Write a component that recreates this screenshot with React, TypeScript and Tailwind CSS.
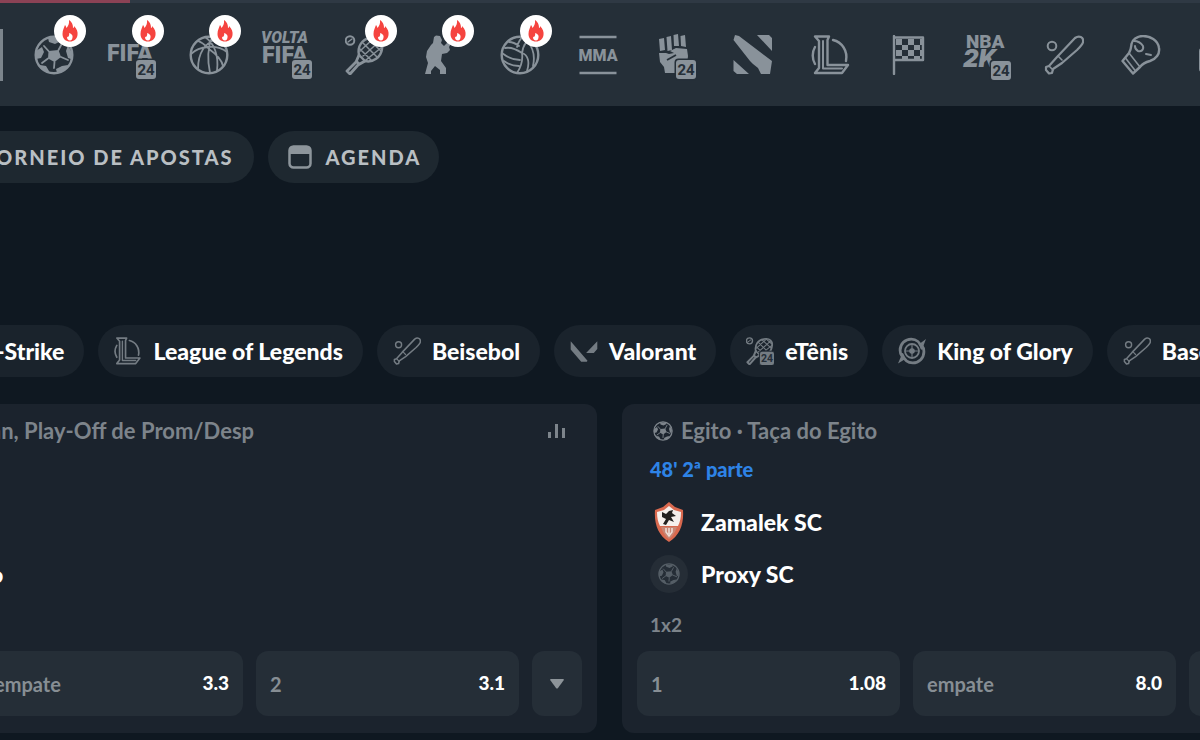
import type { ReactNode } from 'react';

type IconProps = { className?: string };

const ICON = 'w-10 h-10 shrink-0';

function Frame({ className = ICON, children }: IconProps & { children: ReactNode }) {
  return (
    <svg className={className} viewBox="0 0 40 40" fill="none" stroke="currentColor" strokeWidth={2} strokeLinejoin="round" strokeLinecap="round" aria-hidden="true">
      {children}
    </svg>
  );
}

// Wider box for the icons that carry a word mark or the "24" tag
function WordFrame({ children }: { children: ReactNode }) {
  return (
    <svg className="w-[52px] h-[52px] shrink-0 overflow-visible" viewBox="0 0 52 52" fill="currentColor" aria-hidden="true">
      {children}
    </svg>
  );
}

function Tag24({ x, y }: { x: number; y: number }) {
  return (
    <g stroke="none">
      <rect x={x - 1.5} y={y - 1.5} width="23" height="22" rx="4" fill="#252f38" />
      <rect x={x} y={y} width="20" height="19" rx="3" fill="currentColor" />
      <text x={x + 10} y={y + 15} textAnchor="middle" fontSize="15" className="font-[Roboto,sans-serif] font-bold fill-[#252f38]">24</text>
    </g>
  );
}

function SoccerIcon({ className }: IconProps) {
  return (
    <Frame className={className}>
      <circle cx="20" cy="20" r="18.3" strokeWidth="2.4" />
      <path d="M14.5 16L24.5 15 27 22 20.5 27 14 23.5Z" fill="currentColor" stroke="none" />
      <path d="M14.5 16L10 11M24.5 15L28 8.500M27 22L34 25M20.500 27L20 33M14 23.500L8 28" strokeWidth="1.800" />
      <path d="M14 3L26 3 27 6 21 9 15 7ZM2 16L8 12 10 17 7 23 2 24ZM34 10L38 18 37 24 34 23 32 16ZM6 30L12 31 15 36 14 38 7 34ZM22 34L28 31 34 30 30 36 23 38Z" fill="currentColor" stroke="none" />
    </Frame>
  );
}

function BasketballIcon() {
  return (
    <Frame>
      <circle cx="20" cy="20" r="18.3" strokeWidth="2.4" />
      <path d="M2 19C10 11 28 9 38 17M16 2C25 8 30 20 28 36M23 2C19 12 18 24 21 38M28 4C16 8 9 18 9 34M9 6C15 8 18 12 20 14M20 14C27 19 33 26 34 31" strokeWidth="1.8" />
    </Frame>
  );
}

function Racket() {
  return (
    <>
      <circle cx="5" cy="5.5" r="4.3" />
      <path d="M3 7L7 4" strokeWidth="1.4" />
      <path d="M14 20C12 12 17 4 25 3C34 1 39 6 37 14C36 22 28 28 20 26Z" strokeWidth="2.4" />
      <path d="M14 20L11 27 2 36 5 39 13 30 20 26M12 27L14 29" strokeWidth="2.8" />
      <path d="M18 8L32 22M15 14L26 25M23 4L36 16M29 3L37 10M15 16L28 4M18 21L35 6M21 25L37 12" strokeWidth="1.5" />
    </>
  );
}

function TennisIcon() {
  return (
    <Frame>
      <Racket />
    </Frame>
  );
}

function ETennisIcon({ className }: IconProps) {
  return (
    <Frame className={className}>
      <Racket />
      <Tag24 x={20} y={21} />
    </Frame>
  );
}

function CounterStrikeIcon() {
  return (
    <Frame>
      <path d="M12 2L14 .5 18 1 20 5 19 8 22 11 30 3 31 5 27 12 28 15 25 18 20 19 19 26 24 33 24 39 18 39 18 35 13 31 9 36 9 39 3 39 6 28 4 22 5 16 9 10 11 8Z" fill="currentColor" stroke="none" />
    </Frame>
  );
}

function VolleyballIcon() {
  return (
    <Frame>
      <circle cx="20" cy="20" r="18.3" strokeWidth="2.4" />
      <path d="M22 18C16 14 10 12 5 13M19 11C15 8 12 7 9 7M22 18C23 25 21 32 17 38M20 25C13 25 7 22 2 18M19 31C13 31 8 29 4 26M22 18C23 11 26 6 31 4M17 12C18 8 20 4 23 2M22 18C28 20 30 27 27 36M28 7C33 13 35 22 33 31" strokeWidth="1.8" />
    </Frame>
  );
}

function MmaIcon() {
  return (
    <Frame>
      <path d="M1.500 2H38.500M1.500 38H38.500" strokeWidth="2.4" strokeLinecap="butt" />
      <text x="20" y="26" textAnchor="middle" fontSize="16" stroke="none" fill="currentColor" className="font-[Roboto,sans-serif] font-black">MMA</text>
    </Frame>
  );
}

function FifaIcon() {
  return (
    <WordFrame>
      <text x="1" y="32" fontSize="23" className="font-[Roboto,sans-serif] font-black">FIFA</text>
      <Tag24 x={30} y={31} />
    </WordFrame>
  );
}

function VoltaIcon() {
  return (
    <WordFrame>
      <text x="0" y="14" fontSize="16" className="font-[Roboto,sans-serif] font-black italic">VOLTA</text>
      <text x="1" y="34" fontSize="23" className="font-[Roboto,sans-serif] font-black">FIFA</text>
      <Tag24 x={31} y={31} />
    </WordFrame>
  );
}

function FistIcon() {
  return (
    <WordFrame>
      <path d="M10 10L15 9 16 21 11 22ZM17.500 8L22 7 23 21 18.500 22ZM24.500 6L29 5 30 17 25 17ZM31.500 7L36 6 37 18 32 17Z" />
      <path d="M10 24L17 24 20 25 25 24 21 22 27 19 38 20 39 27 38 36 28 44 16 44 15 38 11 33Z" />
      <path d="M18 31L27 26" stroke="#252f38" strokeWidth="1.800" />
      <Tag24 x={27} y={31} />
    </WordFrame>
  );
}

function DotaIcon() {
  return (
    <Frame>
      <path d="M2 0L6 1 39 26 37 39 28 39 25 33 20 29 17 26 .5 5ZM24 0H36L39 3V16ZM.500 25L16 39H4L.500 36Z" fill="currentColor" stroke="none" />
    </Frame>
  );
}

function LeagueIcon({ className }: IconProps) {
  return (
    <Frame className={className}>
      <path d="M4 1.500H18L16.500 5V30H37L31 38H4L8 33V6Z" strokeWidth="2.400" />
      <path d="M12 6V33.500H31" strokeWidth="2" />
      <path d="M22 5C31 7 37 16 35 26" strokeWidth="2.400" />
      <path d="M4 12C1 17 1 24 4 29" strokeWidth="2.400" />
    </Frame>
  );
}

function FlagIcon() {
  return (
    <Frame>
      <path d="M6 1V39M6 2.500H35V25H6" strokeWidth="2.400" />
      <path d="M8 4h6v6h-6zM20 4h6v6h-6zM14 10h6v5h-6zM26 10h6v5h-6zM8 15h6v6h-6zM20 15h6v6h-6zM32 4h3v6h-3zM32 15h3v6h-3zM14 21h6v4h-6zM26 21h6v4h-6z" fill="currentColor" stroke="none" />
    </Frame>
  );
}

function NbaIcon() {
  return (
    <WordFrame>
      <text x="6" y="19" fontSize="19" className="font-[Roboto,sans-serif] font-black">NBA</text>
      <text x="3" y="38" fontSize="24" className="font-[Inter,sans-serif] font-black italic">2K</text>
      <Tag24 x={31} y={32} />
    </WordFrame>
  );
}

function BatIcon({ className }: IconProps) {
  return (
    <Frame className={className}>
      <circle cx="8" cy="11" r="4.300" />
      <path d="M31 3C35 0 40 2 39 7C39 9 37 11 33 15L18 28 9 34 8 38 5 38.500 2 35 2 32 5 31 13 22Z" strokeWidth="2.200" />
      <path d="M5 31L9 35M14 21L18 25" strokeWidth="1.600" />
    </Frame>
  );
}

function GloveIcon() {
  return (
    <Frame>
      <path d="M8 18L1.500 26 12 38.500 19 32C22 28 25 27 29 26C35 24 39 19 38 13C37 5 29 1 22 1C16 1 11 5 10.500 9C10 13 10 15 8 18Z" strokeWidth="2.400" />
      <path d="M8 18L19 32M4.500 23L14.500 36" strokeWidth="1.600" />
      <path d="M13 6C17 6 20 8 22 11C23 15 20 17 17 16C15 15 14 13 14 11M25 19L30 20" />
    </Frame>
  );
}

function ValorantIcon({ className }: IconProps) {
  return (
    <Frame className={className}>
      <path d="M1 6L25 34 24 35.500H16L1 18ZM39 6V17L34 23H23Z" fill="currentColor" stroke="none" />
    </Frame>
  );
}

function KingIcon({ className }: IconProps) {
  return (
    <Frame className={className}>
      <path d="M34 16C32 8 26 3 19 3C10 3 3 10 3 19C3 23 4 26 6 28M6 25C9 33 14 37 21 37C30 37 37 30 37 21C37 17 36 14 34 12" strokeWidth="4" />
      <circle cx="20" cy="20" r="10" strokeWidth="2.600" />
      <circle cx="20" cy="20" r="3" fill="currentColor" />
      <path d="M20 12V28M12 20H28" strokeWidth="1.600" />
      <path d="M40 3L29 11 35 16ZM0 38L11 31 5 26Z" fill="currentColor" stroke="none" />
    </Frame>
  );
}

function CrateIcon() {
  return (
    <Frame>
      <rect x="1" y="14" width="38" height="22" rx="2" fill="currentColor" />
    </Frame>
  );
}

function HotBadge() {
  return (
    <span className="absolute left-1/2 -top-4 flex size-8 items-center justify-center rounded-full bg-white">
      <svg className="h-[22px] w-4" viewBox="0 0 16 22" aria-hidden="true">
        <path d="M7 0C11 3 11 6 11 8C12 8 12 7 12 6C15 9 16 12 15.500 15C15 19 12 21.500 8 21.500C4 21.500 .5 19 .5 14C.5 10 2 8 3 5C4 6 4 7 4.500 8C6 6 7.500 4 7 0Z" fill="#f5443f" />
        <path d="M7 13C10 14 11 15.500 10.500 17.500C10.200 19.500 9.500 20.500 8 20.500C6 20.500 5 19 5 17.500C5.500 16.500 6 17 6.500 16.500C7 15.500 7.500 14.500 7 13Z" fill="#fff" />
      </svg>
    </span>
  );
}

const sports = [
  { name: 'Futebol', icon: <SoccerIcon />, hot: true },
  { name: 'FIFA 24', icon: <FifaIcon />, hot: true },
  { name: 'Basquetebol', icon: <BasketballIcon />, hot: true },
  { name: 'Volta FIFA 24', icon: <VoltaIcon /> },
  { name: 'Ténis', icon: <TennisIcon />, hot: true },
  { name: 'Counter-Strike', icon: <CounterStrikeIcon />, hot: true },
  { name: 'Voleibol', icon: <VolleyballIcon />, hot: true },
  { name: 'MMA', icon: <MmaIcon /> },
  { name: 'Luta 24', icon: <FistIcon /> },
  { name: 'Dota 2', icon: <DotaIcon /> },
  { name: 'League of Legends', icon: <LeagueIcon /> },
  { name: 'Automobilismo', icon: <FlagIcon /> },
  { name: 'NBA 2K24', icon: <NbaIcon /> },
  { name: 'Beisebol', icon: <BatIcon /> },
  { name: 'Boxe', icon: <GloveIcon /> },
  { name: 'Mais', icon: <CrateIcon /> },
];

const CHIP_ICON = 'w-7 h-7 shrink-0 text-[#747c83]';

const chips = [
  { label: 'League of Legends', icon: <LeagueIcon className={CHIP_ICON} /> },
  { label: 'Beisebol', icon: <BatIcon className={CHIP_ICON} /> },
  { label: 'Valorant', icon: <ValorantIcon className={CHIP_ICON} /> },
  { label: 'eTênis', icon: <ETennisIcon className={CHIP_ICON} /> },
  { label: 'King of Glory', icon: <KingIcon className={CHIP_ICON} /> },
  { label: 'Baseball', icon: <BatIcon className={CHIP_ICON} /> },
];

function Odd({ label, value }: { label: string; value: string }) {
  return (
    <button type="button" className="flex h-[65px] items-center justify-between rounded-xl bg-[#252e37] px-3.5 text-xl font-bold">
      <span className="text-[#878e94]">{label}</span>
      <span className="text-[19px] font-black text-white">{value}</span>
    </button>
  );
}

function ZamalekCrest() {
  return (
    <svg className="h-10 w-[38px]" viewBox="0 0 38 40" aria-hidden="true">
      <path d="M19 0L25 5 33 8C34 22 30 33 19 40C8 33 4 22 5 8L13 5Z" fill="#d9694f" />
      <path d="M19 4L24 8 31 10C31 16 30 20 28 24H10C8 20 7 16 7 10L14 8Z" fill="#f6efec" />
      <path d="M11 25H27C25 31 22 35 19 37C16 35 13 31 11 25Z" fill="#c98674" />
      <path d="M12 10L16 12 19 9 23 8 22 11 26 14 21 15 24 20 19 18 16 23 13 22 16 17 12 15Z" fill="#23201f" />
      <path d="M16 26V30L19 34 22 30V26M19 26V32" stroke="#eee0da" strokeWidth="1.500" fill="none" />
    </svg>
  );
}

export default function App() {
  return (
    <div className="min-h-screen overflow-hidden bg-[#0f1821] font-[Lato,sans-serif] text-white">
      {/* Sports strip */}
      <header className="h-[106px] bg-[#252f38]">
        <div className="h-[3px] bg-[#2f3944]">
          <div className="h-full w-[130px] bg-[#8b4255]" />
        </div>
        <nav className="-mr-[58px] flex h-[103px] items-center text-[#89929a]">
          <span className="mr-3 h-[52px] w-[3px] bg-[#7c858c]" />
          {sports.map(sport => (
            <button key={sport.name} type="button" aria-label={sport.name} className="flex flex-1 justify-center">
              <span className="relative flex size-[52px] items-center justify-center">
                {sport.icon}
                {sport.hot && (
                  <span className="absolute inset-x-0 top-0.5">
                    <HotBadge />
                  </span>
                )}
              </span>
            </button>
          ))}
        </nav>
      </header>

      <main>
        {/* Shortcuts */}
        <div className="mt-[25px] flex gap-3.5 text-xl font-black tracking-[2px] text-[#b9bfc3]">
          <a href="#torneio" className="-ml-1 flex h-[52px] shrink-0 items-center rounded-r-full bg-[#1e2830] pr-5 whitespace-nowrap">
            ORNEIO DE APOSTAS
          </a>
          <a href="#agenda" className="flex h-[52px] shrink-0 items-center gap-3.5 rounded-full bg-[#1e2830] pr-[18px] pl-5">
            <svg className="size-6 text-[#8d959b]" viewBox="0 0 24 24" aria-hidden="true">
              <rect x="1.500" y="1.500" width="21" height="21" rx="4" fill="none" stroke="currentColor" strokeWidth="2.500" />
              <path d="M1 9V5Q1 1 5 1H19Q23 1 23 5V9Z" fill="currentColor" />
            </svg>
            AGENDA
          </a>
        </div>

        {/* Sport filters */}
        <div className="mt-[142px] flex gap-3.5 text-[23px] font-black">
          <button type="button" className="-ml-1 flex h-[52px] shrink-0 items-center rounded-r-full bg-[#1a232c] pr-5">
            -Strike
          </button>
          {chips.map(chip => (
            <button key={chip.label} type="button" className="flex h-[52px] shrink-0 items-center gap-[11px] rounded-full bg-[#1a232c] pr-5 pl-4 whitespace-nowrap">
              {chip.icon}
              {chip.label}
            </button>
          ))}
        </div>

        {/* Match cards */}
        <div className="mt-[27px] -mr-[267px] -ml-5 grid grid-cols-[617fr_845fr] gap-[25px] leading-7">
          <article className="flex flex-col rounded-xl bg-[#1b232d] pt-[13px] pr-[15px] pb-[17px]">
            <div className="flex items-center justify-between pr-4 pl-2.5 text-[22px] font-bold text-[#7d848b]">
              <h2>an, Play-Off de Prom/Desp</h2>
              <svg className="h-4 w-[18px]" viewBox="0 0 18 16" fill="currentColor" aria-hidden="true">
                <path d="M0 9h3v6H0zM7 1h3v14H7zM14 5h3v10h-3z" />
              </svg>
            </div>
            <p className="mt-[103px] flex h-[52px] items-center pl-2.5 text-[23px] font-black">o</p>
            <div className="mt-auto grid grid-cols-[1fr_1fr_50px] gap-[13px]">
              <Odd label="empate" value="3.3" />
              <Odd label="2" value="3.1" />
              <button type="button" aria-label="Mais mercados" className="flex items-center justify-center rounded-xl bg-[#252e37] text-[#8d9499]">
                <svg className="h-2.5 w-3.5" viewBox="0 0 14 10" fill="currentColor" aria-hidden="true">
                  <path d="M1 0H13Q14.500 0 13.500 1.500L8 9Q7 10 6 9L.5 1.500Q-.5 0 1 0Z" />
                </svg>
              </button>
            </div>
          </article>

          <article className="rounded-xl bg-[#1b232d] px-[15px] pt-[13px] pb-[17px]">
            <div className="px-[13px]">
              <h2 className="flex items-center gap-2 pl-[3px] text-[22px] font-bold text-[#7d848b]">
                <SoccerIcon className="size-5 shrink-0" />
                <span>Egito · Taça do Egito</span>
              </h2>
              <p className="mt-2.5 text-xl font-black text-[#2e83e6]">48' 2ª parte</p>
              <ul className="mt-[13px] text-[23px] font-black">
                <li className="flex h-[52px] items-center gap-[13px]">
                  <ZamalekCrest />
                  Zamalek SC
                </li>
                <li className="flex h-[52px] items-center gap-[13px]">
                  <span className="flex size-[38px] items-center justify-center rounded-full bg-[#252d36] text-[#555e66]">
                    <SoccerIcon className="size-[22px]" />
                  </span>
                  Proxy SC
                </li>
              </ul>
              <p className="mt-[11px] text-[19px] leading-7 font-bold text-[#7d848b]">1x2</p>
            </div>
            <div className="mt-3 grid grid-cols-3 gap-[13px]">
              <Odd label="1" value="1.08" />
              <Odd label="empate" value="8.0" />
              <button type="button" aria-label="2" className="rounded-xl bg-[#252e37]" />
            </div>
          </article>
        </div>
      </main>
    </div>
  );
}
